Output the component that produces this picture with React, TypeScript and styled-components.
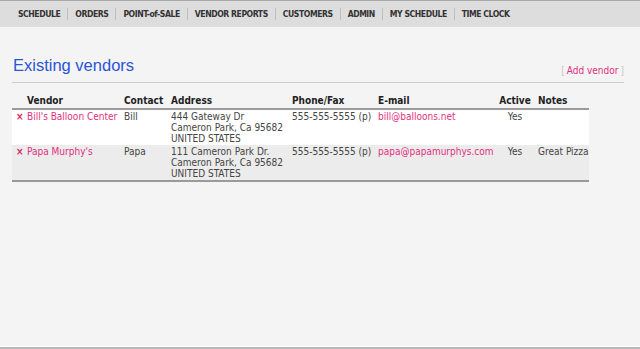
import React from "react";
import styled, { createGlobalStyle } from "styled-components";

const Global = createGlobalStyle`
  html, body { margin: 0; padding: 0; background: #f4f4f4; }
  body { font-family: "DejaVu Sans Condensed", "DejaVu Sans", Verdana, sans-serif; }
`;

const Page = styled.div`
  min-height: 100vh;
  display: flex;
  flex-direction: column;
  box-sizing: border-box;
`;

const NavBar = styled.nav`
  border-top: 1px solid #a9a9a9;
  background: #dddddd;
  height: 26px;
  display: flex;
  align-items: center;
  padding-left: 11px;
`;

const NavItem = styled.a<{ $last?: boolean }>`
  font-size: 8.6px;
  letter-spacing: -0.45px;
  font-weight: bold;
  color: #333;
  text-decoration: none;
  padding: 0 7px 0 7px;
  line-height: 12px;
  border-right: ${(p) => (p.$last ? "none" : "1px solid #bdbdbd")};
`;

const Main = styled.main`
  flex: 1;
  padding: 28px 16px 0 12px;
`;

const TitleRow = styled.div`
  display: flex;
  align-items: flex-end;
  justify-content: space-between;
  border-bottom: 1px solid #cccccc;
  padding: 0 0 7px 1px;
`;

const Title = styled.h1`
  margin: 0;
  font-family: "Liberation Sans", Arial, sans-serif;
  font-weight: normal;
  font-size: 16.5px;
  line-height: 20px;
  color: #2b55d4;
`;

const AddLink = styled.span`
  font-size: 10px;
  color: #c8c8c8;
  margin-bottom: -1px;
  a { color: #e2307c; text-decoration: none; padding: 0 2px; }
`;

const Table = styled.table`
  margin-top: 12px;
  width: 577px;
  border-collapse: collapse;
  table-layout: fixed;
  font-size: 10px;
`;

const Th = styled.th<{ $center?: boolean }>`
  text-align: ${(p) => (p.$center ? "center" : "left")};
  font-weight: bold;
  color: #222;
  padding: 0 3px 1px;
  line-height: 12px;
  border-bottom: 2px solid #9a9a9a;
`;

const Row = styled.tr<{ $alt?: boolean }>`
  background: ${(p) => (p.$alt ? "#ececec" : "#ffffff")};
  &:last-child td { border-bottom: 2px solid #9a9a9a; }
`;

const Td = styled.td<{ $center?: boolean; $nowrap?: boolean }>`
  vertical-align: top;
  text-align: ${(p) => (p.$center ? "center" : "left")};
  white-space: ${(p) => (p.$nowrap ? "nowrap" : "normal")};
  color: #444;
  padding: 1px 3px 1px;
  line-height: 11px;
`;

const Link = styled.a`
  color: #e2307c;
  text-decoration: none;
`;

const Del = styled.a`
  color: #d8265e;
  font-weight: bold;
  text-decoration: none;
  padding-left: 1px;
`;

const Footer = styled.footer`
  height: 0;
  border-top: 1px solid #ffffff;
  border-bottom: 2px solid #b9b9b9;
`;

const nav = ["SCHEDULE", "ORDERS", "POINT-of-SALE", "VENDOR REPORTS", "CUSTOMERS", "ADMIN", "MY SCHEDULE", "TIME CLOCK"];

const vendors = [
  {
    name: "Bill's Balloon Center",
    contact: "Bill",
    addr: ["444 Gateway Dr", "Cameron Park, Ca 95682", "UNITED STATES"],
    phone: "555-555-5555 (p)",
    email: "bill@balloons.net",
    active: "Yes",
    notes: "",
  },
  {
    name: "Papa Murphy's",
    contact: "Papa",
    addr: ["111 Cameron Park Dr.", "Cameron Park, Ca 95682", "UNITED STATES"],
    phone: "555-555-5555 (p)",
    email: "papa@papamurphys.com",
    active: "Yes",
    notes: "Great Pizza",
  },
];

export default function App() {
  return (
    <Page>
      <Global />
      <NavBar>
        {nav.map((n, i) => (
          <NavItem key={n} href="#" $last={i === nav.length - 1}>{n}</NavItem>
        ))}
      </NavBar>
      <Main>
        <TitleRow>
          <Title>Existing vendors</Title>
          <AddLink>[<a href="#">Add vendor</a>]</AddLink>
        </TitleRow>
        <Table>
          <colgroup>
            <col style={{ width: 12 }} />
            <col style={{ width: 97 }} />
            <col style={{ width: 47 }} />
            <col style={{ width: 121 }} />
            <col style={{ width: 86 }} />
            <col style={{ width: 120 }} />
            <col style={{ width: 40 }} />
            <col style={{ width: 54 }} />
          </colgroup>
          <thead>
            <tr>
              <Th />
              <Th>Vendor</Th>
              <Th>Contact</Th>
              <Th>Address</Th>
              <Th>Phone/Fax</Th>
              <Th>E-mail</Th>
              <Th $center>Active</Th>
              <Th>Notes</Th>
            </tr>
          </thead>
          <tbody>
            {vendors.map((v, i) => (
              <Row key={v.name} $alt={i % 2 === 1}>
                <Td><Del href="#">×</Del></Td>
                <Td><Link href="#">{v.name}</Link></Td>
                <Td>{v.contact}</Td>
                <Td>{v.addr.map((l) => <div key={l}>{l}</div>)}</Td>
                <Td>{v.phone}</Td>
                <Td><Link href="#">{v.email}</Link></Td>
                <Td $center>{v.active}</Td>
                <Td $nowrap>{v.notes}</Td>
              </Row>
            ))}
          </tbody>
        </Table>
      </Main>
      <Footer />
    </Page>
  );
}
